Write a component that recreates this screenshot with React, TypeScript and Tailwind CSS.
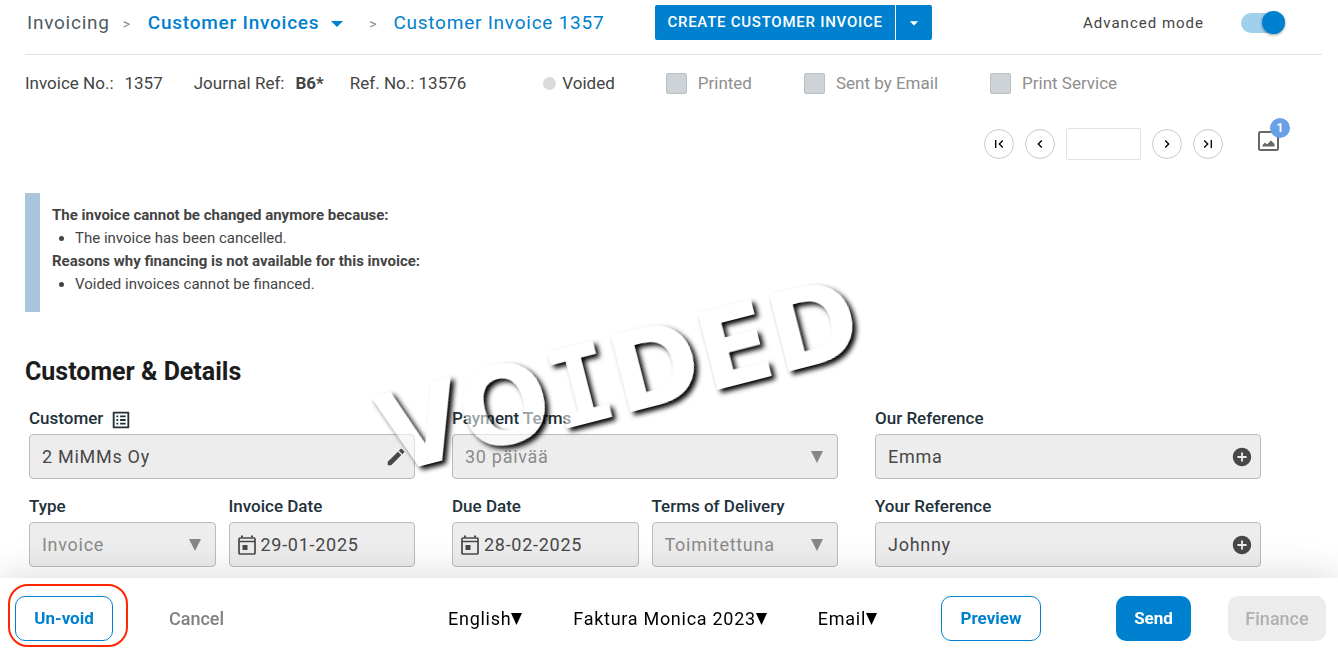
import { useState } from "react";
import type { ReactNode } from "react";
import {
  MdAddCircle,
  MdArrowDropDown,
  MdChevronLeft,
  MdChevronRight,
  MdEdit,
  MdFirstPage,
  MdLastPage,
  MdOutlineListAlt,
} from "react-icons/md";

function Triangle({ className }: { className: string }) {
  return (
    <svg viewBox="0 0 10 10" preserveAspectRatio="none" fill="currentColor" aria-hidden="true" className={className}>
      <path d="M0 0h10L5 10z" />
    </svg>
  );
}

function CalendarIcon() {
  return (
    <svg viewBox="0 0 18 20" fill="none" stroke="currentColor" aria-hidden="true" className="ml-2 h-5 w-[18px] shrink-0">
      <rect x="1" y="3" width="16" height="16" rx="1" strokeWidth="1.700" />
      <path d="M1 6.500h16" strokeWidth="1.500" />
      <path d="M4 0.500v2M14 0.500v2" strokeWidth="2" />
      <path d="M4.500 10h5v5h-5z" fill="currentColor" stroke="none" />
    </svg>
  );
}

function Field({
  id,
  label,
  labelIcon,
  children,
}: {
  id: string;
  label: string;
  labelIcon?: ReactNode;
  children: ReactNode;
}) {
  return (
    <div className="min-w-0 flex-1">
      <div className="flex h-7 items-center gap-[7px] pb-0.5 text-[#22313a]">
        <label htmlFor={id} className="text-[17px] font-medium">
          {label}
        </label>
        {labelIcon}
      </div>
      <div className="flex h-[45px] items-center rounded border border-[#b9bcbe] bg-[#ededed] text-[#484848]">
        {children}
      </div>
    </div>
  );
}

function TextField({ id, label, value, icon, action, labelIcon }: {
  id: string;
  label: string;
  value: string;
  icon: ReactNode;
  action: string;
  labelIcon?: ReactNode;
}) {
  return (
    <Field id={id} label={label} labelIcon={labelIcon}>
      <input id={id} readOnly defaultValue={value} className="min-w-0 flex-1 bg-transparent pl-3 text-lg tracking-[0.04em] outline-none" />
      <button type="button" aria-label={action} className="px-[7px]">
        {icon}
      </button>
    </Field>
  );
}

function DateField({ id, label, value }: { id: string; label: string; value: string }) {
  return (
    <Field id={id} label={label}>
      <CalendarIcon />
      <input id={id} readOnly defaultValue={value} className="min-w-0 flex-1 bg-transparent pl-[5px] text-lg tracking-[0.04em] outline-none" />
    </Field>
  );
}

function SelectField({ id, label, value }: { id: string; label: string; value: string }) {
  return (
    <Field id={id} label={label}>
      <select id={id} disabled className="min-w-0 flex-1 appearance-none bg-transparent pl-3 text-lg tracking-[0.04em] text-[#8a8a8a] opacity-100">
        <option>{value}</option>
      </select>
      <Triangle className="mr-3.5 h-3 w-3 shrink-0 text-[#868686]" />
    </Field>
  );
}

function StatusCheck({ id, label }: { id: string; label: string }) {
  return (
    <div className="flex items-center gap-[11px]">
      <input
        id={id}
        type="checkbox"
        disabled
        className="size-[21px] appearance-none rounded-xs border border-[#b9c0c3] bg-[#cdd3d6]"
      />
      <label htmlFor={id} className="text-[17px] text-[#8e8e8e]">
        {label}
      </label>
    </div>
  );
}

function PagerButton({ label, children }: { label: string; children: ReactNode }) {
  return (
    <button
      type="button"
      aria-label={label}
      className="flex size-[30px] items-center justify-center rounded-full border border-[#c9c9c9] bg-white text-black"
    >
      {children}
    </button>
  );
}

function FooterSelect({ label, value }: { label: string; value: string }) {
  return (
    <div className="flex items-center">
      <select aria-label={label} className="field-sizing-content appearance-none bg-transparent text-lg tracking-[0.04em] text-black">
        <option>{value}</option>
      </select>
      <Triangle className="h-3 w-[11px] text-black" />
    </div>
  );
}

function VoidedStamp() {
  return (
    <>
      <svg className="absolute size-0" aria-hidden="true">
        <filter id="stamp-shadow" x="-10%" y="-20%" width="120%" height="140%" colorInterpolationFilters="sRGB">
          <feGaussianBlur in="SourceAlpha" stdDeviation="2.5" />
          <feOffset dx="3" dy="4" />
          <feComposite in2="SourceAlpha" operator="out" result="shadow" />
          <feComponentTransfer in="SourceGraphic" result="face">
            <feFuncA type="linear" slope="0.55" />
          </feComponentTransfer>
          <feMerge>
            <feMergeNode in="shadow" />
            <feMergeNode in="face" />
          </feMerge>
        </filter>
      </svg>
      <div className="pointer-events-none absolute top-[323px] left-[373px] -rotate-[14.4deg] font-['DejaVu_Sans'] text-[108px] leading-none font-bold whitespace-nowrap text-white [filter:url(#stamp-shadow)]">
        VO<span className="font-['DejaVu_Sans_Mono']">I</span>DED
      </div>
    </>
  );
}

export default function App() {
  const [advanced, setAdvanced] = useState(true);

  return (
    <div className="relative min-h-screen overflow-hidden bg-white pb-20 font-[Roboto,sans-serif] text-[#444]">
      <header className="mr-4 ml-[25px] flex h-[55px] items-start border-b border-[#dfe1e2] pt-[5px]">
        <nav aria-label="Breadcrumb" className="flex h-[35px] items-center pt-0.5 text-[19px] tracking-[0.04em] text-[#0081cf]">
          <a href="#invoicing" className="ml-0.5 text-[#4f5b62]">Invoicing</a>
          <span className="mx-[13px] text-sm text-[#8a8a8a]">&gt;</span>
          <a href="#invoices" className="ml-1 font-medium">Customer Invoices</a>
          <Triangle className="ml-3 h-1.5 w-3" />
          <span className="mr-4 ml-[26px] text-sm text-[#8a8a8a]">&gt;</span>
          <a href="#invoice-1357">Customer Invoice 1357</a>
        </nav>
        <div className="ml-[51px] flex h-[35px] gap-px text-white">
          <button type="button" className="rounded-l-xs bg-[#0081cf] px-3 text-[15px] font-medium tracking-wider">
            CREATE CUSTOMER INVOICE
          </button>
          <button type="button" aria-label="More create options" className="flex w-9 items-center justify-center rounded-r-xs bg-[#0081cf]">
            <MdArrowDropDown className="size-5" />
          </button>
        </div>
        <div className="mr-[37px] ml-auto flex h-[35px] items-center gap-[37px]">
          <label htmlFor="advanced" className="pt-0.5 text-[15px] tracking-[1px]">Advanced mode</label>
          <span className="relative flex h-5 w-11 items-center rounded-full bg-[#9fd0ec]">
            <input
              id="advanced"
              type="checkbox"
              role="switch"
              checked={advanced}
              onChange={(e) => setAdvanced(e.target.checked)}
              className="size-[23px] appearance-none rounded-full bg-[#8a8a8a] shadow-[0_1px_3px_rgba(0,0,0,0.4)] checked:ml-auto checked:bg-[#0081cf]"
            />
          </span>
        </div>
      </header>

      <section aria-label="Invoice status" className="flex h-14 items-center px-[25px] pt-px text-[17px]">
        <p>Invoice No.:</p>
        <p className="ml-[11px]">1357</p>
        <p className="ml-[31px]">Journal Ref:</p>
        <p className="ml-[11px] font-bold">B6*</p>
        <p className="ml-[26px]">Ref. No.: 13576</p>
        <span className="ml-[77px] size-[13px] rounded-full bg-[#dadada]" />
        <p className="ml-1.5">Voided</p>
        <div className="ml-[51px] flex gap-[52px]">
          <StatusCheck id="printed" label="Printed" />
          <StatusCheck id="emailed" label="Sent by Email" />
          <StatusCheck id="print-service" label="Print Service" />
        </div>
      </section>

      <div className="mt-[17px] flex h-8 items-center justify-end gap-[11px] pr-[59px]">
        <PagerButton label="First invoice"><MdFirstPage className="size-4" /></PagerButton>
        <PagerButton label="Previous invoice"><MdChevronLeft className="size-4" /></PagerButton>
        <input aria-label="Invoice number" className="h-8 w-[75px] rounded-xs border border-[#e2e2e2] text-center" />
        <PagerButton label="Next invoice"><MdChevronRight className="size-4" /></PagerButton>
        <PagerButton label="Last invoice"><MdLastPage className="size-4" /></PagerButton>
        <button type="button" aria-label="Attachments" className="relative ml-6 -mt-1.5 h-5 w-[21px] text-[#666]">
          <svg viewBox="0 0 21 20" className="h-5 w-[21px]" fill="none" aria-hidden="true">
            <rect x="1" y="1" width="19" height="18" rx="1.5" stroke="currentColor" strokeWidth="2" />
            <path d="M4.500 15.500v-1.500l2.500-2.500 2 2 4-4 3.500 3.500v2.500z" fill="currentColor" />
          </svg>
          <span className="absolute -top-[13px] left-3 flex size-5 items-center justify-center rounded-full bg-[#69a1e6] text-xs font-bold text-white">
            1
          </span>
        </button>
      </div>

      <section aria-label="Notice" className="mx-[25px] mt-[33px] h-[119px] border-l-[15px] border-[#a9c4db] pt-[11px] pl-3 text-[15px] leading-[23px]">
        <p className="font-bold">The invoice cannot be changed anymore because:</p>
        <ul className="list-disc pl-[23px]">
          <li>The invoice has been cancelled.</li>
        </ul>
        <p className="font-bold">Reasons why financing is not available for this invoice:</p>
        <ul className="list-disc pl-[23px]">
          <li>Voided invoices cannot be financed.</li>
        </ul>
      </section>

      <main className="mt-11">
        <h1 className="px-[25px] text-[25px] leading-8 font-bold text-[#1c1c1c]">Customer &amp; Details</h1>
        <div className="mt-[18px] mr-[77px] ml-[29px] grid grid-cols-3 gap-x-[37px] gap-y-[15px]">
          <TextField
            id="customer"
            label="Customer"
            value="2 MiMMs Oy"
            action="Edit customer"
            icon={<MdEdit className="size-[22px]" />}
            labelIcon={<MdOutlineListAlt className="mt-0.5 size-[22px]" />}
          />
          <SelectField id="payment-terms" label="Payment Terms" value="30 päivää" />
          <TextField id="our-ref" label="Our Reference" value="Emma" action="Add our reference" icon={<MdAddCircle className="size-[22px]" />} />
          <div className="flex gap-[13px]">
            <SelectField id="type" label="Type" value="Invoice" />
            <DateField id="invoice-date" label="Invoice Date" value="29-01-2025" />
          </div>
          <div className="flex gap-[13px]">
            <DateField id="due-date" label="Due Date" value="28-02-2025" />
            <SelectField id="delivery" label="Terms of Delivery" value="Toimitettuna" />
          </div>
          <TextField id="your-ref" label="Your Reference" value="Johnny" action="Add your reference" icon={<MdAddCircle className="size-[22px]" />} />
        </div>
      </main>

      <VoidedStamp />

      <footer className="fixed inset-x-0 bottom-0 flex h-[82px] items-center bg-white pr-3 pb-px pl-2 text-lg font-medium shadow-[0_0_40px_rgba(0,0,0,0.16)]">
        <div className="-mt-1.5 rounded-[20px] border-2 border-[#ff2600] pt-2.5 pr-[13px] pb-1 pl-[5px]">
          <button type="button" className="h-[45px] w-[98px] rounded-[10px] border border-[#0081cf] text-[17px] font-bold text-[#0081cf]">
            Un-void
          </button>
        </div>
        <button type="button" className="ml-[41px] text-[#808080]">Cancel</button>
        <div className="ml-auto flex gap-[51px] font-normal">
          <FooterSelect label="Language" value="English" />
          <FooterSelect label="Template" value="Faktura Monica 2023" />
          <FooterSelect label="Delivery method" value="Email" />
        </div>
        <button type="button" className="ml-16 h-[45px] w-[100px] rounded-[10px] border border-[#0081cf] text-[17px] font-bold text-[#0081cf]">
          Preview
        </button>
        <button type="button" className="ml-[75px] h-[45px] w-[75px] rounded-[10px] bg-[#0081cf] text-[17px] font-bold text-white">Send</button>
        <button type="button" disabled className="ml-[37px] h-[45px] w-[98px] rounded-[10px] bg-[#ececec] text-[#b0b0b0]">
          Finance
        </button>
      </footer>
    </div>
  );
}
